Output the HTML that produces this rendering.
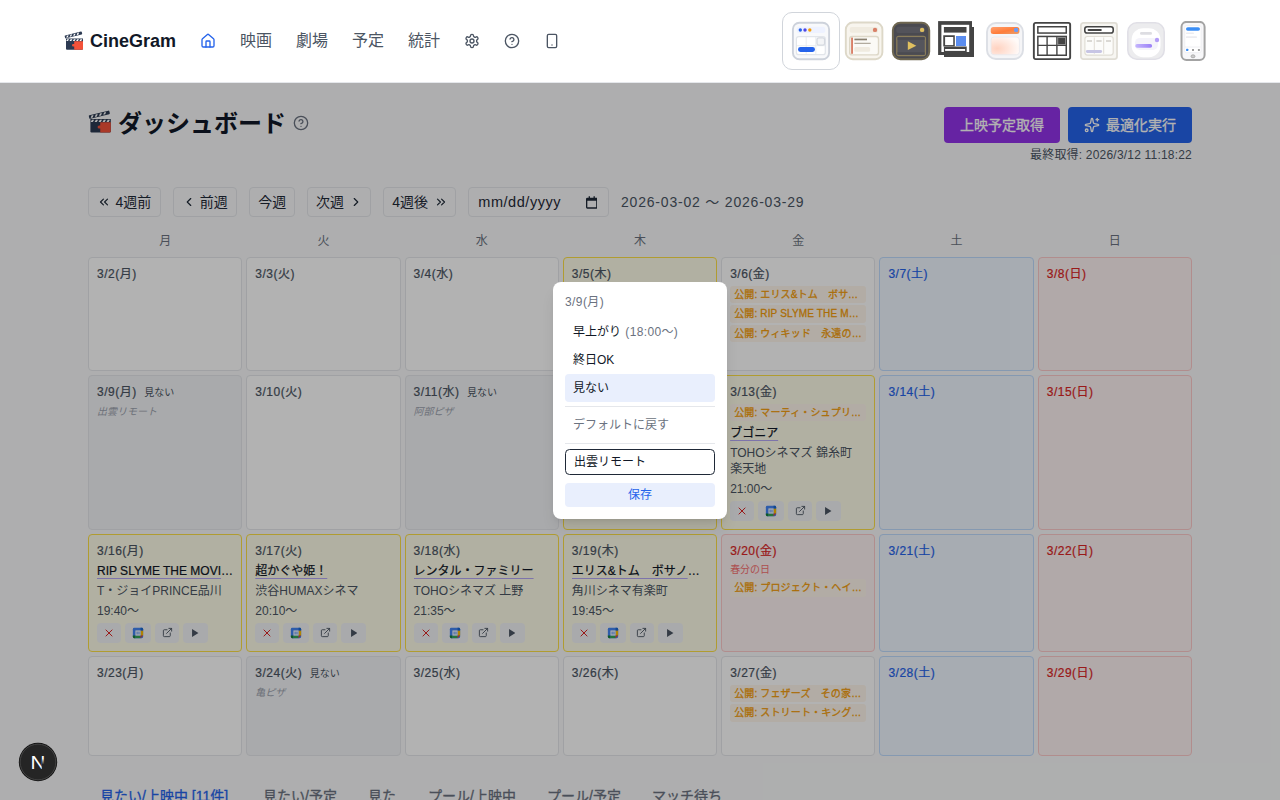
<!DOCTYPE html>
<html lang="ja">
<head>
<meta charset="utf-8">
<title>CineGram</title>
<style>
*{box-sizing:border-box;margin:0;padding:0}
html,body{width:1280px;height:800px;overflow:hidden}
body{font-family:"Liberation Sans","Noto Sans CJK JP",sans-serif;background:#f9fafb;color:#111827;font-size:16px;line-height:1.5;position:relative}
svg{display:block}
.ic{position:absolute;fill:none;stroke-width:2;stroke-linecap:round;stroke-linejoin:round}
.hdr{position:absolute;left:0;top:0;width:1280px;height:83px;background:#fff;border-bottom:1px solid #e5e7eb;z-index:50}
.abs{position:absolute;white-space:nowrap}
.logo{left:90px;top:27px;font-weight:700;font-size:18px;line-height:28px;color:#111827}
.nav{top:29px;font-size:16px;line-height:24px;color:#4b5563}
.ov{position:absolute;left:0;top:83px;width:1280px;height:717px;background:rgba(0,0,0,.3);z-index:40}
h1{position:absolute;left:118px;top:105.500px;font-size:24px;line-height:36px;font-weight:700;color:#111827;white-space:nowrap}
.btn{position:absolute;top:107px;height:36px;border-radius:4px;color:#fff;font-size:14px;line-height:36px;white-space:nowrap;font-weight:400;-webkit-text-stroke:.3px}
.wk{position:absolute;top:187px;height:30px;border:1px solid #e5e7eb;border-radius:4px;font-size:14px;line-height:28px;color:#1f2937;white-space:nowrap}
.wk span{position:absolute;top:0}
.wk svg{position:absolute;top:7px;fill:none;stroke:#1f2937;stroke-width:2;stroke-linecap:round;stroke-linejoin:round}
.dow{position:absolute;top:231px;width:154.3px;text-align:center;font-size:12px;line-height:20px;color:#6b7280}
.cell{position:absolute;width:154.3px;border:1px solid #e5e7eb;border-radius:4px;background:#fff;padding:6px 8px 0 8px;overflow:hidden;font-size:12px}
.cell .d{font-size:12px;line-height:20px;font-weight:400;-webkit-text-stroke:.22px;letter-spacing:.5px;color:#4b5563;white-space:nowrap}
.cell.sat{background:#eff6ff;border-color:#bfdbfe}.cell.sat .d{color:#2563eb}
.cell.sun{background:#fef2f2;border-color:#fecaca}.cell.sun .d{color:#dc2626}
.cell.no{background:#f3f4f6}
.cell.has{background:#fefce8;border-color:#fde047}
.tag{display:block;margin-top:2px;height:17.5px;border-radius:3px;background:#fff7ed;color:#f59e0b;font-size:10px;line-height:17.5px;font-weight:400;-webkit-text-stroke:.3px;letter-spacing:.15px;padding:0 4px;white-space:nowrap;overflow:hidden;text-overflow:ellipsis}
.d+.tag{margin-top:1.500px}
.mini{font-size:10px;color:#4b5563;margin-left:7.500px;font-weight:400;-webkit-text-stroke:0;letter-spacing:0}
.memo{font-size:10px;line-height:14px;color:#9ca3af;font-style:italic;margin-top:2px}
.hol{font-size:10px;line-height:15px;color:#f87171;margin-top:1px}
.ttl{font-size:12px;line-height:20px;color:#111827;white-space:nowrap;overflow:hidden;text-overflow:ellipsis;margin-top:-.5px;font-weight:400;-webkit-text-stroke:.22px}
.tag+.ttl{margin-top:1.500px}
.ttl span{text-decoration:underline;text-decoration-color:#b4a7f5;text-decoration-thickness:1px;text-underline-offset:2.5px}
.th{font-size:12px;line-height:16px;color:#4b5563;margin-top:2.500px}
.tm{font-size:12px;line-height:20px;color:#4b5563;margin-top:2px}
.acts{display:flex;gap:4px;margin-top:2px}
.acts i{display:flex;align-items:center;justify-content:center;width:24px;height:19.5px;border-radius:4px;background:#f3f4f6}
.acts i.a2{width:26px}.acts i.a4{width:25px}
.pop{position:absolute;left:553px;top:282px;width:174px;height:237px;background:#fff;border-radius:8px;z-index:60;box-shadow:0 10px 15px -3px rgba(0,0,0,.1),0 4px 6px -4px rgba(0,0,0,.1)}
.pop .o{position:absolute;left:12px;width:150px;height:28px;border-radius:4px;font-size:12px;line-height:28px;padding-left:8px;color:#111827;white-space:nowrap}
.tab{position:absolute;top:785.500px;font-size:14px;line-height:20px;color:#6b7280;white-space:nowrap;font-weight:400;-webkit-text-stroke:.3px}
.th9{position:absolute;top:21px;width:40px;height:40px}
</style>
</head>
<body>
<div class="hdr">
  <svg class="abs" style="left:64px;top:31px" width="20" height="20" viewBox="0 0 20 20"><g transform="rotate(-14 2.2 7.600)"><rect x="1.300" y="4.300" width="17.600" height="3" rx=".7" fill="#2c3a52"/><path d="M3.600 4.900l1.700 0-1.100 1.800-1.700 0zM7.200 4.900l1.700 0-1.100 1.800-1.700 0zM10.800 4.900l1.700 0-1.100 1.800-1.700 0zM14.400 4.900l1.700 0-1.100 1.800-1.700 0z" fill="#fff"/></g><path d="M2 7.600h17v10.200a1 1 0 0 1-1 1H3a1 1 0 0 1-1-1z" fill="#2c3a52"/><path d="M10.200 10.300H19v7.500a1 1 0 0 1-1 1h-7.800v-3.300h-.9a1.300 1.300 0 0 1 0-2.600h.9z" fill="#f4523a"/><path d="M3.300 8.200l1.800 0-1.100 1.700-1.800 0zM6.600 8.200l1.800 0-1.100 1.700-1.800 0zM9.900 8.200l1.800 0-1.100 1.700-1.800 0zM13.200 8.200l1.800 0-1.100 1.700-1.800 0zM16.500 8.200l1.800 0-1.100 1.700-1.800 0z" fill="#fff"/></svg>
  <div class="abs logo">CineGram</div>
  <svg class="ic" style="left:200px;top:33px;stroke:#2563eb" width="16" height="16" viewBox="0 0 24 24"><path d="M15 21v-8a1 1 0 0 0-1-1h-4a1 1 0 0 0-1 1v8"/><path d="M3 10a2 2 0 0 1 .709-1.528l7-5.999a2 2 0 0 1 2.582 0l7 5.999A2 2 0 0 1 21 10v9a2 2 0 0 1-2 2H5a2 2 0 0 1-2-2z"/></svg>
  <div class="abs nav" style="left:240px">映画</div>
  <div class="abs nav" style="left:296px">劇場</div>
  <div class="abs nav" style="left:352px">予定</div>
  <div class="abs nav" style="left:408px">統計</div>
  <svg class="ic" style="left:464px;top:33px;stroke:#4b5563" width="16" height="16" viewBox="0 0 24 24"><path d="M12.220 2h-.44a2 2 0 0 0-2 2v.18a2 2 0 0 1-1 1.730l-.43.25a2 2 0 0 1-2 0l-.15-.08a2 2 0 0 0-2.730.73l-.22.38a2 2 0 0 0 .73 2.730l.15.1a2 2 0 0 1 1 1.720v.51a2 2 0 0 1-1 1.740l-.15.09a2 2 0 0 0-.73 2.730l.22.38a2 2 0 0 0 2.730.73l.15-.08a2 2 0 0 1 2 0l.43.25a2 2 0 0 1 1 1.730V20a2 2 0 0 0 2 2h.44a2 2 0 0 0 2-2v-.18a2 2 0 0 1 1-1.730l.43-.25a2 2 0 0 1 2 0l.15.08a2 2 0 0 0 2.730-.73l.22-.39a2 2 0 0 0-.73-2.730l-.15-.08a2 2 0 0 1-1-1.740v-.5a2 2 0 0 1 1-1.740l.15-.09a2 2 0 0 0 .73-2.730l-.22-.38a2 2 0 0 0-2.730-.73l-.15.08a2 2 0 0 1-2 0l-.43-.25a2 2 0 0 1-1-1.730V4a2 2 0 0 0-2-2z"/><circle cx="12" cy="12" r="3"/></svg>
  <svg class="ic" style="left:504px;top:33px;stroke:#4b5563" width="16" height="16" viewBox="0 0 24 24"><circle cx="12" cy="12" r="10"/><path d="M9.090 9a3 3 0 0 1 5.830 1c0 2-3 3-3 3"/><path d="M12 17h.01"/></svg>
  <svg class="ic" style="left:544px;top:33px;stroke:#4b5563" width="16" height="16" viewBox="0 0 24 24"><rect width="14" height="20" x="5" y="2" rx="2" ry="2"/><path d="M12 18h.01"/></svg>
  
<div class="abs" style="left:782px;top:12px;width:58px;height:58px;border:1px solid #d1d5db;border-radius:10px"></div>
<svg class="th9" style="left:791px" viewBox="0 0 40 40"><rect x="1.900" y="1.700" width="36.200" height="36.600" rx="6.500" fill="#f8f9fb" stroke="#cdd2db" stroke-width="1.900"/><rect x="5.700" y="5.700" width="28.600" height="6.400" rx="2.500" fill="#eef2ff"/><circle cx="9.300" cy="9" r="1.700" fill="#2563eb"/><circle cx="14" cy="9" r="1.700" fill="#4f46e5"/><circle cx="18.800" cy="9" r="1.700" fill="#f59e0b"/><rect x="5.400" y="15.700" width="28.900" height="18" rx="2.300" fill="#fff" stroke="#e2e5ea" stroke-width="1.200"/><path d="M15.200 16v17.500M24.800 16v17.500M5.800 24.700h28.200" stroke="#e5e7eb" stroke-width=".8" fill="none"/><rect x="26" y="16.800" width="7.600" height="7.400" rx="1.800" fill="#f3f4f6" stroke="#d5d9e0" stroke-width="1.300"/><rect x="7" y="26" width="17" height="4.900" rx="2.450" fill="#2563eb"/></svg>
<svg class="th9" style="left:844px" viewBox="0 0 40 40"><rect x="1.800" y="1.500" width="36.600" height="36.700" rx="7" fill="#f8f5ee" stroke="#ddd8c8" stroke-width="1.900"/><rect x="5.700" y="6" width="28.400" height="5.800" rx="2" fill="#f0ebe0"/><circle cx="31" cy="8.900" r="2.200" fill="#d98068"/><rect x="5.700" y="15.500" width="28.800" height="18.400" rx="2.500" fill="#fbfaf6" stroke="#ddd8c8" stroke-width="1.400"/><rect x="7.100" y="16.600" width="1.900" height="16.200" fill="#d98068"/><rect x="10.400" y="17.600" width="12.600" height="1.700" fill="#8a8070"/><rect x="10.400" y="21.800" width="16.300" height="1" fill="#a09888"/><rect x="10.300" y="26.100" width="15.800" height="4.700" rx="1.500" fill="#f0ebe0"/></svg>
<svg class="th9" style="left:891px" viewBox="0 0 40 40"><rect x="1.900" y="1.700" width="36.300" height="36.500" rx="7.500" fill="#4a4a50" stroke="#6e6650" stroke-width="2"/><rect x="5.300" y="5.800" width="28.500" height="6.100" rx="2.500" fill="#53535a"/><circle cx="31.100" cy="8.900" r="2.200" fill="#e0c060"/><rect x="5.800" y="15.500" width="28.600" height="19" rx="2" fill="#55555c" stroke="#8a7d5a" stroke-width="1.300"/><rect x="6.500" y="16.200" width="27.200" height="2.600" fill="#4b4b51"/><rect x="6.500" y="31.300" width="27.200" height="2.500" fill="#4b4b51"/><path d="M16.800 20.300l8.500 4.400-8.500 4.400z" fill="#e0c060"/></svg>
<svg class="th9" style="left:936px;top:19px" viewBox="0 0 40 40"><rect x="8" y="8" width="30" height="30" fill="#444"/><rect x="2.100" y="2.100" width="33.900" height="33.900" fill="#444"/><rect x="5.400" y="5.800" width="27.800" height="27.200" fill="#fff"/><rect x="7.900" y="8" width="22.600" height="5.600" fill="#444"/><rect x="7.250" y="16.250" width="11.550" height="11.150" fill="#444"/><rect x="9.100" y="18" width="8.150" height="8.100" fill="#fff"/><rect x="20" y="17" width="10" height="10" fill="#5b8def"/><rect x="7.900" y="27.500" width="22.800" height="6" fill="#444"/><rect x="9.100" y="30" width="20" height="1.900" fill="#fff"/></svg>
<svg class="th9" style="left:985px" viewBox="0 0 40 40"><defs><linearGradient id="og" x1="0" y1="0" x2="1" y2="1"><stop offset="0" stop-color="#ffa070"/><stop offset=".55" stop-color="#ff7d3a"/><stop offset="1" stop-color="#e8a070"/></linearGradient><radialGradient id="rg" cx=".22" cy=".65" r=".8"><stop offset="0" stop-color="#ffd2c0"/><stop offset="1" stop-color="#fffaf8"/></radialGradient></defs><rect x="2" y="2" width="36" height="36" rx="9" fill="#f5f5f7" stroke="#dcdfe5" stroke-width="1.900"/><rect x="5.750" y="6" width="28.650" height="7" rx="2.500" fill="url(#og)"/><circle cx="31.100" cy="8.900" r="2.200" fill="#6b9cf5"/><rect x="6" y="16" width="28.400" height="17.750" rx="3" fill="url(#rg)" stroke="#e8e9ee" stroke-width=".8"/></svg>
<svg class="th9" style="left:1032px" viewBox="0 0 40 40"><rect x="1.850" y="1.850" width="36.300" height="36.300" rx="1.800" fill="#fff" stroke="#444" stroke-width="1.900"/><rect x="5.850" y="5.750" width="28.400" height="6.300" fill="#fff" stroke="#444" stroke-width="1.500"/><rect x="5.850" y="15.450" width="28.400" height="18.800" fill="#fff" stroke="#444" stroke-width="1.500"/><path d="M15.100 15.500v18.700M24.900 15.500v18.700M5.900 24.400h28.300" stroke="#444" stroke-width="1.400" fill="none"/><rect x="25.800" y="16.600" width="7.700" height="6.900" fill="#444" stroke="#8a8a8a" stroke-width=".9"/></svg>
<svg class="th9" style="left:1079px" viewBox="0 0 40 40"><rect x="1.900" y="1.900" width="36.100" height="36.200" rx="2.500" fill="#f7f6f2" stroke="#e0ddd5" stroke-width="1.800"/><rect x="5.800" y="5.700" width="28.400" height="6.300" rx="2.300" fill="#fff" stroke="#444" stroke-width="1.600"/><rect x="8.600" y="8" width="14.200" height="1.900" rx=".95" fill="#444"/><rect x="5.900" y="15.500" width="28.300" height="18.600" rx="2.500" fill="#fcfcfa" stroke="#e0ddd5" stroke-width="1.200"/><path d="M15.300 16.500v16.300M24.700 16.500v16.300" stroke="#e0ddd5" stroke-width="1" fill="none"/><rect x="8" y="19.250" width="5" height="1.500" fill="#cfcdc8"/><rect x="17.400" y="19.250" width="5.200" height="1.500" fill="#cfcdc8"/><rect x="27" y="19.250" width="5" height="1.500" fill="#cfcdc8"/><rect x="6.900" y="29" width="16.200" height="2.900" rx="1.450" fill="#c7c5e4"/></svg>
<svg class="th9" style="left:1126px" viewBox="0 0 40 40"><defs><linearGradient id="pg" x1="0" y1="0" x2="1" y2="0"><stop offset="0" stop-color="#c4b5fd"/><stop offset="1" stop-color="#9a7ff7"/></linearGradient></defs><rect x="1.800" y="1.800" width="36.400" height="36.400" rx="9" fill="#ececee" stroke="#e0dfe6" stroke-width="1.500"/><rect x="5.600" y="7.200" width="28.900" height="29" rx="11.500" fill="#fff"/><rect x="14" y="11" width="12" height="2.750" rx="1.375" fill="#dddde2"/><rect x="9" y="16.900" width="22.900" height="12.100" rx="5" fill="#f4f3fa"/><rect x="9.250" y="23.100" width="16.850" height="3.650" rx="1.825" fill="url(#pg)"/><circle cx="31" cy="19" r="2.200" fill="#b49df7"/></svg>
<svg class="th9" style="left:1173px" viewBox="0 0 40 40"><rect x="8.500" y="0.900" width="23.100" height="38.100" rx="5" fill="#f7f7f9" stroke="#a3a3a3" stroke-width="2"/><rect x="11.750" y="4.700" width="16.350" height="26.900" rx="1.500" fill="#fff" stroke="#ececf0" stroke-width=".8"/><rect x="13" y="6.250" width="14" height="3.450" rx="1.725" fill="#3b8ef5"/><rect x="13" y="11.600" width="7.900" height="1.500" rx=".5" fill="#ececf0"/><rect x="13" y="15.300" width="10.900" height="1.700" rx=".5" fill="#ececf0"/><path d="M12 26h15.800" stroke="#ececf0" stroke-width=".8"/><rect x="13.100" y="27.800" width="2.200" height="2.200" rx=".5" fill="#3b8ef5"/><rect x="19" y="27.900" width="2" height="2" rx=".3" fill="#9a9a9a"/><rect x="24.900" y="27.900" width="2" height="2" rx=".3" fill="#9a9a9a"/><ellipse cx="20" cy="35.300" rx="2" ry="1.500" fill="#ccc" stroke="#a3a3a3" stroke-width=".8"/></svg>

</div>
<svg class="abs" style="left:88.2px;top:109.7px" width="24" height="24" viewBox="0 0 20 20"><g transform="rotate(-14 2.2 7.600)"><rect x="1.300" y="4.300" width="17.600" height="3" rx=".7" fill="#2c3a52"/><path d="M3.600 4.900l1.700 0-1.100 1.800-1.700 0zM7.200 4.900l1.700 0-1.100 1.800-1.700 0zM10.800 4.900l1.700 0-1.100 1.800-1.700 0zM14.400 4.900l1.700 0-1.100 1.800-1.700 0z" fill="#fff"/></g><path d="M2 7.600h17v10.200a1 1 0 0 1-1 1H3a1 1 0 0 1-1-1z" fill="#2c3a52"/><path d="M10.200 10.300H19v7.500a1 1 0 0 1-1 1h-7.800v-3.300h-.9a1.300 1.300 0 0 1 0-2.600h.9z" fill="#f4523a"/><path d="M3.300 8.200l1.800 0-1.100 1.700-1.800 0zM6.600 8.200l1.800 0-1.100 1.700-1.800 0zM9.900 8.200l1.800 0-1.100 1.700-1.800 0zM13.200 8.200l1.800 0-1.100 1.700-1.800 0zM16.500 8.200l1.800 0-1.100 1.700-1.800 0z" fill="#fff"/></svg>
<h1>ダッシュボード</h1>
<svg class="ic" style="left:293px;top:114.500px;stroke:#6b7280" width="16" height="16" viewBox="0 0 24 24"><circle cx="12" cy="12" r="10"/><path d="M9.090 9a3 3 0 0 1 5.830 1c0 2-3 3-3 3"/><path d="M12 17h.01"/></svg>
<div class="btn" style="left:944px;width:116px;background:#9333ea;text-align:center">上映予定取得</div>
<div class="btn" style="left:1068px;width:124px;background:#2563eb;padding-left:38px">最適化実行</div>
<svg class="ic" style="left:1084px;top:117px;stroke:#fff" width="16" height="16" viewBox="0 0 24 24"><path d="M11.017 2.814a1 1 0 0 1 1.966 0l1.051 5.558a2 2 0 0 0 1.594 1.594l5.558 1.051a1 1 0 0 1 0 1.966l-5.558 1.051a2 2 0 0 0-1.594 1.594l-1.051 5.558a1 1 0 0 1-1.966 0l-1.051-5.558a2 2 0 0 0-1.594-1.594l-5.558-1.051a1 1 0 0 1 0-1.966l5.558-1.051a2 2 0 0 0 1.594-1.594z"/><path d="M20 2v4"/><path d="M22 4h-4"/><circle cx="4" cy="20" r="2"/></svg>
<div class="abs" style="right:88px;top:147px;font-size:12px;line-height:16px;color:#4b5563;letter-spacing:.2px">最終取得: 2026/3/12 11:18:22</div>
<div class="wk" style="left:88px;width:72.500px"><svg style="left:8px" width="14" height="14" viewBox="0 0 24 24"><path d="m11 17-5-5 5-5"/><path d="m18 17-5-5 5-5"/></svg><span style="left:26.500px">4週前</span></div>
<div class="wk" style="left:173.250px;width:63.500px"><svg style="left:8px" width="14" height="14" viewBox="0 0 24 24"><path d="m15 18-6-6 6-6"/></svg><span style="left:25.500px">前週</span></div>
<div class="wk" style="left:249.250px;width:45.500px"><span style="left:8px">今週</span></div>
<div class="wk" style="left:307px;width:63.500px"><span style="left:8px">次週</span><svg style="left:40.500px" width="14" height="14" viewBox="0 0 24 24"><path d="m9 18 6-6-6-6"/></svg></div>
<div class="wk" style="left:383.250px;width:72.500px"><span style="left:8px">4週後</span><svg style="left:49.500px" width="14" height="14" viewBox="0 0 24 24"><path d="m6 17 5-5-5-5"/><path d="m13 17 5-5-5-5"/></svg></div>
<div class="wk" style="left:468.250px;width:140.500px"><span style="left:9px;font-size:14.500px;letter-spacing:.55px">mm/dd/yyyy</span><svg style="left:116.500px;top:7.500px;stroke:none;fill:#1f2937" width="11.500" height="13" viewBox="0 0 13 14"><path d="M3 0h1.500v1.500h4V0H10v1.500h1.500A1.500 1.500 0 0 1 13 3v9.500a1.500 1.500 0 0 1-1.500 1.500h-10A1.500 1.500 0 0 1 0 12.500V3a1.500 1.500 0 0 1 1.500-1.500H3zM1.500 5v7.500h10V5z"/></svg></div>
<div class="abs" style="left:621px;top:191px;font-size:14px;line-height:22px;color:#4b5563;letter-spacing:.8px">2026-03-02 〜 2026-03-29</div>
<div class="dow" style="left:88.0px">月</div>
<div class="dow" style="left:246.3px">火</div>
<div class="dow" style="left:404.6px">水</div>
<div class="dow" style="left:562.9px">木</div>
<div class="dow" style="left:721.1px">金</div>
<div class="dow" style="left:879.4px">土</div>
<div class="dow" style="left:1037.7px">日</div>
<div class="cell" style="left:88.00px;top:257px;height:114px"><div class="d">3/2(月)</div></div>
<div class="cell" style="left:246.29px;top:257px;height:114px"><div class="d">3/3(火)</div></div>
<div class="cell" style="left:404.57px;top:257px;height:114px"><div class="d">3/4(水)</div></div>
<div class="cell has" style="left:562.86px;top:257px;height:114px"><div class="d">3/5(木)</div></div>
<div class="cell" style="left:721.14px;top:257px;height:114px"><div class="d">3/6(金)</div><div class="tag">公開: エリス&amp;トム　ボサノヴァ　ある愛</div><div class="tag">公開: RIP SLYME THE MOVIE</div><div class="tag">公開: ウィキッド　永遠の約束</div></div>
<div class="cell sat" style="left:879.43px;top:257px;height:114px"><div class="d">3/7(土)</div></div>
<div class="cell sun" style="left:1037.71px;top:257px;height:114px"><div class="d">3/8(日)</div></div>
<div class="cell no" style="left:88.00px;top:375px;height:155px"><div class="d">3/9(月)<span class="mini">見ない</span></div><div class="memo">出雲リモート</div></div>
<div class="cell" style="left:246.29px;top:375px;height:155px"><div class="d">3/10(火)</div></div>
<div class="cell no" style="left:404.57px;top:375px;height:155px"><div class="d">3/11(水)<span class="mini">見ない</span></div><div class="memo">阿部ピザ</div></div>
<div class="cell has" style="left:562.86px;top:375px;height:155px"><div class="d">3/12(木)</div></div>
<div class="cell has" style="left:721.14px;top:375px;height:155px"><div class="d">3/13(金)</div><div class="tag">公開: マーティ・シュプリーム 世界をつかめ</div><div class="ttl"><span>ブゴニア</span></div><div class="th">TOHOシネマズ 錦糸町 楽天地</div><div class="tm">21:00〜</div><div class="acts"><i class="a1"><svg width="8" height="8" viewBox="0 0 8 8"><path d="M.7.7l6.600 6.600M7.300.7L.7 7.300" stroke="#dc2626" stroke-width="1" fill="none"/></svg></i><i class="a2"><svg width="12" height="12" viewBox="0 0 14 14"><rect x="1" y="1" width="12" height="12" rx="1.500" fill="#4285f4"/><path d="M1 10h3v3H2.500A1.500 1.500 0 0 1 1 11.500z" fill="#188038"/><rect x="4" y="10" width="6" height="3" fill="#34a853"/><rect x="10" y="4" width="3" height="6" fill="#fbbc04"/><path d="M10 10h3l-3 3z" fill="#ea4335"/><path d="M10 1h1.500A1.500 1.500 0 0 1 13 2.500V4h-3z" fill="#1967d2"/><rect x="4" y="4" width="6" height="6" fill="#fff"/><rect x="5.400" y="5.300" width="1.100" height="3.400" fill="#4285f4"/><rect x="7.600" y="5.300" width="1.100" height="3.400" fill="#4285f4"/></svg></i><i class="a3"><svg width="11" height="11" viewBox="0 0 24 24" fill="none" stroke="#4b5563" stroke-width="2" stroke-linecap="round" stroke-linejoin="round"><path d="M15 3h6v6"/><path d="M10 14 21 3"/><path d="M18 13v6a2 2 0 0 1-2 2H5a2 2 0 0 1-2-2V8a2 2 0 0 1 2-2h6"/></svg></i><i class="a4"><svg width="6.500" height="8" viewBox="0 0 8 10"><path d="M0 0l8 5-8 5z" fill="#4b5563"/></svg></i></div></div>
<div class="cell sat" style="left:879.43px;top:375px;height:155px"><div class="d">3/14(土)</div></div>
<div class="cell sun" style="left:1037.71px;top:375px;height:155px"><div class="d">3/15(日)</div></div>
<div class="cell has" style="left:88.00px;top:534px;height:118px"><div class="d">3/16(月)</div><div class="ttl"><span>RIP SLYME THE MOVIE -25th ANNIVERSARY-</span></div><div class="th">T・ジョイPRINCE品川</div><div class="tm">19:40〜</div><div class="acts"><i class="a1"><svg width="8" height="8" viewBox="0 0 8 8"><path d="M.7.7l6.600 6.600M7.300.7L.7 7.300" stroke="#dc2626" stroke-width="1" fill="none"/></svg></i><i class="a2"><svg width="12" height="12" viewBox="0 0 14 14"><rect x="1" y="1" width="12" height="12" rx="1.500" fill="#4285f4"/><path d="M1 10h3v3H2.500A1.500 1.500 0 0 1 1 11.500z" fill="#188038"/><rect x="4" y="10" width="6" height="3" fill="#34a853"/><rect x="10" y="4" width="3" height="6" fill="#fbbc04"/><path d="M10 10h3l-3 3z" fill="#ea4335"/><path d="M10 1h1.500A1.500 1.500 0 0 1 13 2.500V4h-3z" fill="#1967d2"/><rect x="4" y="4" width="6" height="6" fill="#fff"/><rect x="5.400" y="5.300" width="1.100" height="3.400" fill="#4285f4"/><rect x="7.600" y="5.300" width="1.100" height="3.400" fill="#4285f4"/></svg></i><i class="a3"><svg width="11" height="11" viewBox="0 0 24 24" fill="none" stroke="#4b5563" stroke-width="2" stroke-linecap="round" stroke-linejoin="round"><path d="M15 3h6v6"/><path d="M10 14 21 3"/><path d="M18 13v6a2 2 0 0 1-2 2H5a2 2 0 0 1-2-2V8a2 2 0 0 1 2-2h6"/></svg></i><i class="a4"><svg width="6.500" height="8" viewBox="0 0 8 10"><path d="M0 0l8 5-8 5z" fill="#4b5563"/></svg></i></div></div>
<div class="cell has" style="left:246.29px;top:534px;height:118px"><div class="d">3/17(火)</div><div class="ttl"><span>超かぐや姫！</span></div><div class="th">渋谷HUMAXシネマ</div><div class="tm">20:10〜</div><div class="acts"><i class="a1"><svg width="8" height="8" viewBox="0 0 8 8"><path d="M.7.7l6.600 6.600M7.300.7L.7 7.300" stroke="#dc2626" stroke-width="1" fill="none"/></svg></i><i class="a2"><svg width="12" height="12" viewBox="0 0 14 14"><rect x="1" y="1" width="12" height="12" rx="1.500" fill="#4285f4"/><path d="M1 10h3v3H2.500A1.500 1.500 0 0 1 1 11.500z" fill="#188038"/><rect x="4" y="10" width="6" height="3" fill="#34a853"/><rect x="10" y="4" width="3" height="6" fill="#fbbc04"/><path d="M10 10h3l-3 3z" fill="#ea4335"/><path d="M10 1h1.500A1.500 1.500 0 0 1 13 2.500V4h-3z" fill="#1967d2"/><rect x="4" y="4" width="6" height="6" fill="#fff"/><rect x="5.400" y="5.300" width="1.100" height="3.400" fill="#4285f4"/><rect x="7.600" y="5.300" width="1.100" height="3.400" fill="#4285f4"/></svg></i><i class="a3"><svg width="11" height="11" viewBox="0 0 24 24" fill="none" stroke="#4b5563" stroke-width="2" stroke-linecap="round" stroke-linejoin="round"><path d="M15 3h6v6"/><path d="M10 14 21 3"/><path d="M18 13v6a2 2 0 0 1-2 2H5a2 2 0 0 1-2-2V8a2 2 0 0 1 2-2h6"/></svg></i><i class="a4"><svg width="6.500" height="8" viewBox="0 0 8 10"><path d="M0 0l8 5-8 5z" fill="#4b5563"/></svg></i></div></div>
<div class="cell has" style="left:404.57px;top:534px;height:118px"><div class="d">3/18(水)</div><div class="ttl"><span>レンタル・ファミリー</span></div><div class="th">TOHOシネマズ 上野</div><div class="tm">21:35〜</div><div class="acts"><i class="a1"><svg width="8" height="8" viewBox="0 0 8 8"><path d="M.7.7l6.600 6.600M7.300.7L.7 7.300" stroke="#dc2626" stroke-width="1" fill="none"/></svg></i><i class="a2"><svg width="12" height="12" viewBox="0 0 14 14"><rect x="1" y="1" width="12" height="12" rx="1.500" fill="#4285f4"/><path d="M1 10h3v3H2.500A1.500 1.500 0 0 1 1 11.500z" fill="#188038"/><rect x="4" y="10" width="6" height="3" fill="#34a853"/><rect x="10" y="4" width="3" height="6" fill="#fbbc04"/><path d="M10 10h3l-3 3z" fill="#ea4335"/><path d="M10 1h1.500A1.500 1.500 0 0 1 13 2.500V4h-3z" fill="#1967d2"/><rect x="4" y="4" width="6" height="6" fill="#fff"/><rect x="5.400" y="5.300" width="1.100" height="3.400" fill="#4285f4"/><rect x="7.600" y="5.300" width="1.100" height="3.400" fill="#4285f4"/></svg></i><i class="a3"><svg width="11" height="11" viewBox="0 0 24 24" fill="none" stroke="#4b5563" stroke-width="2" stroke-linecap="round" stroke-linejoin="round"><path d="M15 3h6v6"/><path d="M10 14 21 3"/><path d="M18 13v6a2 2 0 0 1-2 2H5a2 2 0 0 1-2-2V8a2 2 0 0 1 2-2h6"/></svg></i><i class="a4"><svg width="6.500" height="8" viewBox="0 0 8 10"><path d="M0 0l8 5-8 5z" fill="#4b5563"/></svg></i></div></div>
<div class="cell has" style="left:562.86px;top:534px;height:118px"><div class="d">3/19(木)</div><div class="ttl"><span>エリス&amp;トム　ボサノヴァ　ある愛の歌</span></div><div class="th">角川シネマ有楽町</div><div class="tm">19:45〜</div><div class="acts"><i class="a1"><svg width="8" height="8" viewBox="0 0 8 8"><path d="M.7.7l6.600 6.600M7.300.7L.7 7.300" stroke="#dc2626" stroke-width="1" fill="none"/></svg></i><i class="a2"><svg width="12" height="12" viewBox="0 0 14 14"><rect x="1" y="1" width="12" height="12" rx="1.500" fill="#4285f4"/><path d="M1 10h3v3H2.500A1.500 1.500 0 0 1 1 11.500z" fill="#188038"/><rect x="4" y="10" width="6" height="3" fill="#34a853"/><rect x="10" y="4" width="3" height="6" fill="#fbbc04"/><path d="M10 10h3l-3 3z" fill="#ea4335"/><path d="M10 1h1.500A1.500 1.500 0 0 1 13 2.500V4h-3z" fill="#1967d2"/><rect x="4" y="4" width="6" height="6" fill="#fff"/><rect x="5.400" y="5.300" width="1.100" height="3.400" fill="#4285f4"/><rect x="7.600" y="5.300" width="1.100" height="3.400" fill="#4285f4"/></svg></i><i class="a3"><svg width="11" height="11" viewBox="0 0 24 24" fill="none" stroke="#4b5563" stroke-width="2" stroke-linecap="round" stroke-linejoin="round"><path d="M15 3h6v6"/><path d="M10 14 21 3"/><path d="M18 13v6a2 2 0 0 1-2 2H5a2 2 0 0 1-2-2V8a2 2 0 0 1 2-2h6"/></svg></i><i class="a4"><svg width="6.500" height="8" viewBox="0 0 8 10"><path d="M0 0l8 5-8 5z" fill="#4b5563"/></svg></i></div></div>
<div class="cell sun" style="left:721.14px;top:534px;height:118px"><div class="d">3/20(金)</div><div class="hol">春分の日</div><div class="tag">公開: プロジェクト・ヘイル・メアリー</div></div>
<div class="cell sat" style="left:879.43px;top:534px;height:118px"><div class="d">3/21(土)</div></div>
<div class="cell sun" style="left:1037.71px;top:534px;height:118px"><div class="d">3/22(日)</div></div>
<div class="cell" style="left:88.00px;top:656px;height:100px"><div class="d">3/23(月)</div></div>
<div class="cell no" style="left:246.29px;top:656px;height:100px"><div class="d">3/24(火)<span class="mini">見ない</span></div><div class="memo">亀ピザ</div></div>
<div class="cell" style="left:404.57px;top:656px;height:100px"><div class="d">3/25(水)</div></div>
<div class="cell" style="left:562.86px;top:656px;height:100px"><div class="d">3/26(木)</div></div>
<div class="cell" style="left:721.14px;top:656px;height:100px"><div class="d">3/27(金)</div><div class="tag">公開: フェザーズ　その家に巣食うもの</div><div class="tag">公開: ストリート・キングダム 自分の</div></div>
<div class="cell sat" style="left:879.43px;top:656px;height:100px"><div class="d">3/28(土)</div></div>
<div class="cell sun" style="left:1037.71px;top:656px;height:100px"><div class="d">3/29(日)</div></div>
<div class="tab" style="left:100px;color:#2563eb">見たい/上映中 [11件]</div>
<div class="tab" style="left:263px">見たい/予定</div>
<div class="tab" style="left:368px">見た</div>
<div class="tab" style="left:428px">プール/上映中</div>
<div class="tab" style="left:547px">プール/予定</div>
<div class="tab" style="left:652px">マッチ待ち</div>
<div class="ov"></div>
<div class="pop">
  <div class="abs" style="left:12px;top:10.700px;font-size:12px;line-height:18px;color:#6b7280;letter-spacing:.4px">3/9(月)</div>
  <div class="o" style="top:36px">早上がり <span style="color:#6b7280;letter-spacing:.35px;margin-left:1px">(18:00〜)</span></div>
  <div class="o" style="top:63.500px">終日OK</div>
  <div class="o" style="top:92px;background:#e9effd">見ない</div>
  <div class="abs" style="left:12px;top:124px;width:150px;height:1px;background:#e5e7eb"></div>
  <div class="o" style="top:128.700px;color:#6b7280">デフォルトに戻す</div>
  <div class="abs" style="left:12px;top:161px;width:150px;height:1px;background:#e5e7eb"></div>
  <div class="abs" style="left:12px;top:167px;width:150px;height:26px;border:1.300px solid #1f2937;border-radius:4.500px;font-size:12px;line-height:24px;padding-left:8px;color:#111827">出雲リモート</div>
  <div class="abs" style="left:12px;top:201px;width:150px;height:24px;border-radius:4px;background:#e9effd;color:#2563eb;font-size:12px;line-height:24px;text-align:center">保存</div>
</div>
<svg class="abs" style="left:18px;top:742px;z-index:70" width="40" height="40" viewBox="0 0 40 40"><defs><linearGradient id="ng" gradientUnits="userSpaceOnUse" x1="0" y1="16.500" x2="0" y2="22.500"><stop offset="0" stop-color="#252525" stop-opacity="0"/><stop offset="1" stop-color="#252525"/></linearGradient></defs><circle cx="20" cy="20" r="19.200" fill="#111"/><circle cx="20" cy="20" r="17.900" fill="#252525" stroke="#4a4a4a" stroke-width=".9"/><text x="20" y="27.400" font-size="18.700" text-anchor="middle" fill="#fff" font-family="Liberation Sans, sans-serif" transform="translate(20 0) scale(1.1 1) translate(-20 0)">N</text><rect x="23.700" y="16.500" width="3.600" height="11.500" fill="url(#ng)"/></svg>
</body>
</html>
